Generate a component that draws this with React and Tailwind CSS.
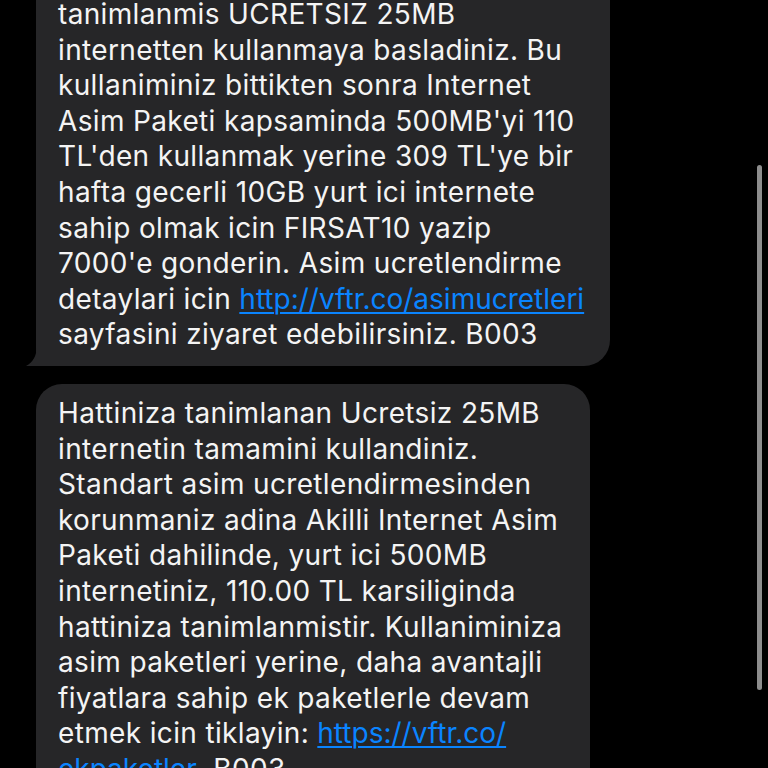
import React from 'react';

const first = [
  'tanimlanmis UCRETSIZ 25MB',
  'internetten kullanmaya basladiniz. Bu',
  'kullaniminiz bittikten sonra Internet',
  "Asim Paketi kapsaminda 500MB'yi 110",
  "TL'den kullanmak yerine 309 TL'ye bir",
  'hafta gecerli 10GB yurt ici internete',
  'sahip olmak icin FIRSAT10 yazip',
  "7000'e gonderin. Asim ucretlendirme",
];

const second = [
  'Hattiniza tanimlanan Ucretsiz 25MB',
  'internetin tamamini kullandiniz.',
  'Standart asim ucretlendirmesinden',
  'korunmaniz adina Akilli Internet Asim',
  'Paketi dahilinde, yurt ici 500MB',
  'internetiniz, 110.00 TL karsiliginda',
  'hattiniza tanimlanmistir. Kullaniminiza',
  'asim paketleri yerine, daha avantajli',
  'fiyatlara sahip ek paketlerle devam',
];

const Link = ({ children }) => (
  <span className="tracking-[0px] text-[#0a84ff] underline decoration-[1.5px] underline-offset-[3px]">{children}</span>
);

const Line = ({ children }) => <div className="whitespace-nowrap">{children}</div>;

export default function App() {
  return (
    <div
      className="relative h-[768px] w-[768px] overflow-hidden bg-black text-[28px] leading-[35.6px] tracking-[0.35px] text-[#f4f4f4]"
      style={{ fontFamily: 'Inter, "Noto Sans", sans-serif' }}
    >
      <div className="flex flex-col gap-[18px] pl-[36px] -mt-[3px]">
        {/* first message, top is scrolled off */}
        <div className="relative w-[574px] rounded-b-[26px] rounded-bl-none bg-[#262628] pl-[22px] pb-[13px]">
          {first.map((l) => (
            <Line key={l}>{l}</Line>
          ))}
          <Line>
            detaylari icin <Link>http://vftr.co/asimucretleri</Link>
          </Line>
          <Line>sayfasini ziyaret edebilirsiniz. B003</Line>
          <svg className="absolute -left-[10px] bottom-0" width="12" height="18" viewBox="0 0 12 18">
            <path d="M10.5 0 C10.5 8 7 14 0 18 L10.5 18 Z" fill="#262628" />
          </svg>
        </div>

        <div className="w-[554px] rounded-[26px] bg-[#262628] pl-[22px] pt-[12px] pb-[20px]">
          {second.map((l) => (
            <Line key={l}>{l}</Line>
          ))}
          <Line>
            etmek icin tiklayin: <Link>https://vftr.co/</Link>
          </Line>
          <Line>
            <Link>ekpaketler</Link>. B003
          </Line>
        </div>
      </div>

      {/* scroll indicator */}
      <div className="absolute right-[6px] top-[165px] h-[525px] w-[5px] rounded-full bg-[#8d8d8d]" />
    </div>
  );
}
